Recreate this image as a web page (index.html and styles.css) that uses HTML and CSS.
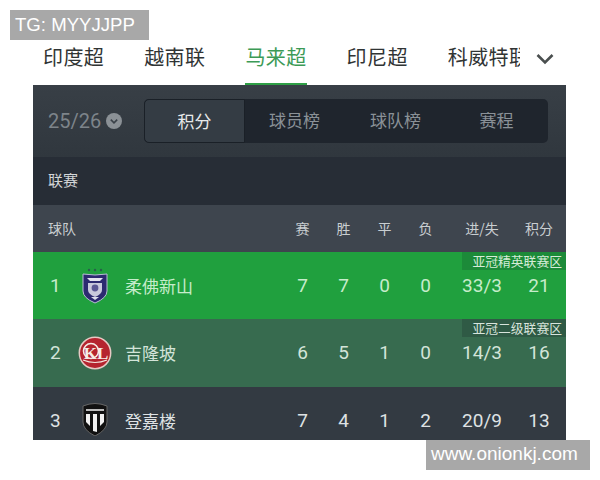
FILE: index.html
```html
<!DOCTYPE html>
<html lang="zh-CN">
<head>
  <meta charset="UTF-8" />
  <title>马来超 积分榜</title>
  <link rel="stylesheet" href="styles.css">
</head>
<body>
  <div class="mark mark-top">TG: MYYJJPP</div>

  <nav class="tabs">
    <a class="tab">印度超</a>
    <a class="tab">越南联</a>
    <a class="tab active">马来超</a>
    <a class="tab">印尼超</a>
    <a class="tab tab-cut">科威特联</a>
    <svg class="more" width="18" height="12" viewBox="0 0 18 12">
      <path d="M1.5 2 L9 9.5 L16.5 2" fill="none" stroke="#4a4f4f" stroke-width="2.6"/>
    </svg>
  </nav>

  <main class="panel">
    <div class="controls">
      <div class="season">
        25/26
        <svg width="16" height="16" viewBox="0 0 16 16">
          <circle cx="8" cy="8" r="8" fill="#8b9196"/>
          <path d="M4.8 6.6 L8 9.8 L11.2 6.6" fill="none" stroke="#3a4148" stroke-width="1.6"/>
        </svg>
      </div>
      <div class="segments">
        <div class="segment on">积分</div>
        <div class="segment">球员榜</div>
        <div class="segment">球队榜</div>
        <div class="segment">赛程</div>
      </div>
    </div>

    <div class="league">联赛</div>

    <div class="row head">
      <div class="team-head">球队</div>
      <div>赛</div><div>胜</div><div>平</div><div>负</div><div>进/失</div><div>积分</div>
    </div>

    <div class="row team first">
      <div class="rank">1</div>
      <svg class="logo" width="30" height="36" viewBox="0 0 30 36">
        <circle cx="9" cy="2" r="1.2" fill="#2b5f4c"/>
        <circle cx="15" cy="2" r="1.2" fill="#2b5f4c"/>
        <circle cx="21" cy="2" r="1.2" fill="#2b5f4c"/>
        <path d="M3 6 Q15 8 27 6 V23 Q27 30 15 35 Q3 30 3 23 Z" fill="#2c2a70" stroke="#b9b9d6" stroke-width="1"/>
        <path d="M7 10 H23 L20 13 H10 Z" fill="#e4e4ee"/>
        <path d="M8 15 H22 V22 Q22 26 15 29 Q8 26 8 22 Z" fill="#c9c9dc"/>
        <circle cx="15" cy="20" r="3.4" fill="#5b5894"/>
        <path d="M11 29 L15 32 L19 29 Z" fill="#dcdcea"/>
      </svg>
      <div class="name">柔佛新山</div>
      <div>7</div><div>7</div><div>0</div><div>0</div><div>33/3</div><div>21</div>
      <div class="zone">亚冠精英联赛区</div>
    </div>

    <div class="row team second">
      <div class="rank">2</div>
      <svg class="logo" width="34" height="34" viewBox="0 0 34 34">
        <circle cx="17" cy="17" r="15.7" fill="#b5242f" stroke="#e6c9c4" stroke-width="1.5"/>
        <circle cx="13" cy="15" r="7.5" fill="none" stroke="#f5ece6" stroke-width="1.6"/>
        <path d="M5 24 Q17 29 29 24" fill="none" stroke="#f2e6df" stroke-width="1.2"/>
        <text x="18" y="23" text-anchor="middle" class="logo-text">KL</text>
      </svg>
      <div class="name">吉隆坡</div>
      <div>6</div><div>5</div><div>1</div><div>0</div><div>14/3</div><div>16</div>
      <div class="zone">亚冠二级联赛区</div>
    </div>

    <div class="row team third">
      <div class="rank">3</div>
      <svg class="logo logo-up" width="28" height="34" viewBox="0 0 28 34">
        <path d="M2 4 Q14 -1 26 4 V20 Q26 28 14 34 Q2 28 2 20 Z" fill="#111" stroke="#666" stroke-width="1"/>
        <path d="M5 7 H23 V9 H5 Z" fill="#bdbdbd"/>
        <path d="M5 12 H9 V24 L5 20 Z M12 12 H16 V30 L12 29 Z M19 12 H23 V20 L19 24 Z" fill="#f1f1f1"/>
      </svg>
      <div class="name">登嘉楼</div>
      <div>7</div><div>4</div><div>1</div><div>2</div><div>20/9</div><div>13</div>
    </div>
  </main>

  <div class="mark mark-bottom">www.onionkj.com</div>
</body>
</html>
```
FILE: styles.css
```css
* {
  box-sizing: border-box;
}

html, body {
  margin: 0;
  height: 100%;
  background: #fff;
}

body {
  position: relative;
  width: 600px;
  height: 480px;
  overflow: hidden;
  padding-top: 40px;
  font-family: "Noto Sans CJK SC", "Noto Sans", sans-serif;
}

/* Watermark boxes over the picture */
.mark {
  position: absolute;
  z-index: 2;
  background: #a8a8a8;
  color: #fff;
  font-family: "Liberation Sans", sans-serif;
  white-space: nowrap;
}

.mark-top {
  left: 10px;
  top: 10px;
  width: 139px;
  height: 30px;
  padding-left: 5px;
  font-size: 18.6px;
  line-height: 30px;
}

.mark-bottom {
  left: 426px;
  top: 440px;
  width: 164px;
  height: 30px;
  padding-left: 5px;
  font-size: 19px;
  line-height: 28px;
}

/* League tabs */
.tabs {
  display: flex;
  align-items: flex-start;
  height: 45px;
  padding-left: 43px;
  gap: 40px;
}

.tab {
  height: 45px;
  font-size: 20px;
  letter-spacing: .4px;
  line-height: 34px;
  color: #303434;
  white-space: nowrap;
}

.tab.active {
  color: #3c9a56;
  border-bottom: 2px solid #2f9f46;
}

.tab-cut {
  width: 72px;
  overflow: hidden;
}

.more {
  margin: 13px 0 0 -24px;
}

/* Dark table panel */
.panel {
  width: 533px;
  height: 355px;
  margin-left: 33px;
  background: #333a42;
  color: #e4e7e8;
  overflow: hidden;
}

.controls {
  display: flex;
  align-items: center;
  height: 72px;
  padding-left: 15px;
  background: linear-gradient(#383f46, #30373e);
}

.season {
  display: flex;
  align-items: center;
  gap: 5px;
  width: 96px;
  font-family: Roboto, sans-serif;
  font-size: 20px;
  color: #7d848a;
}

.segments {
  display: grid;
  grid-template-columns: repeat(4, 1fr);
  width: 404px;
  height: 44px;
  margin-top: -1px;
  border-radius: 5px;
  background: #1f252d;
}

.segment {
  padding-right: 2px;
  font-size: 17px;
  line-height: 42px;
  text-align: center;
  color: #8a9197;
}

.segment.on {
  padding-right: 0;
  color: #e8eaeb;
  background: #343c44;
  border: 1px solid #1a2027;
  border-radius: 5px 0 0 5px;
}

.league {
  height: 48px;
  padding-left: 15px;
  font-size: 15px;
  line-height: 46px;
  color: #d3d6d8;
  background: #272d36;
}

/* Table rows share one grid so the columns line up */
.row {
  position: relative;
  display: grid;
  grid-template-columns: 30px 34px 170px repeat(4, 41px) 72px 42px;
  align-items: center;
  padding-left: 15px;
  text-align: center;
}

.row.head {
  grid-template-columns: 234px repeat(4, 41px) 72px 42px;
  height: 47px;
  padding-bottom: 2px;
  font-size: 14px;
  color: #c9ced1;
  background: #3e454e;
}

.team-head {
  text-align: left;
}

.team {
  height: 68px;
  font-family: Roboto, "Noto Sans CJK SC", sans-serif;
  font-size: 19px;
  padding-bottom: 1px;
}

.first {
  height: 67px;
  padding-bottom: 0;
  color: #c6eccb;
  background: #20a03e;
}

.second {
  color: #d3e4d9;
  background: #376b4f;
}

.third {
  padding-bottom: 2px;
  color: #dfe2e4;
  background: #333a42;
}

.rank {
  text-align: left;
  padding-left: 2px;
}

.logo {
  justify-self: center;
}

.logo-up {
  margin-top: -2px;
}

.name {
  padding-left: 13px;
  font-family: "Noto Sans CJK SC", sans-serif;
  font-size: 17px;
  text-align: left;
}

.zone {
  position: absolute;
  right: 0;
  top: 0;
  width: 104px;
  height: 18px;
  padding-right: 4px;
  font-family: "Noto Sans CJK SC", sans-serif;
  font-size: 12.8px;
  line-height: 18px;
  text-align: right;
  white-space: nowrap;
}

.first .zone {
  color: #d5ecd8;
  background: #1c8a39;
}

.second .zone {
  color: #d8e4dc;
  background: #2f5a45;
}

.logo-text {
  font-family: "Liberation Serif", serif;
  font-size: 17px;
  font-weight: 700;
  fill: #f5ece6;
}
```
